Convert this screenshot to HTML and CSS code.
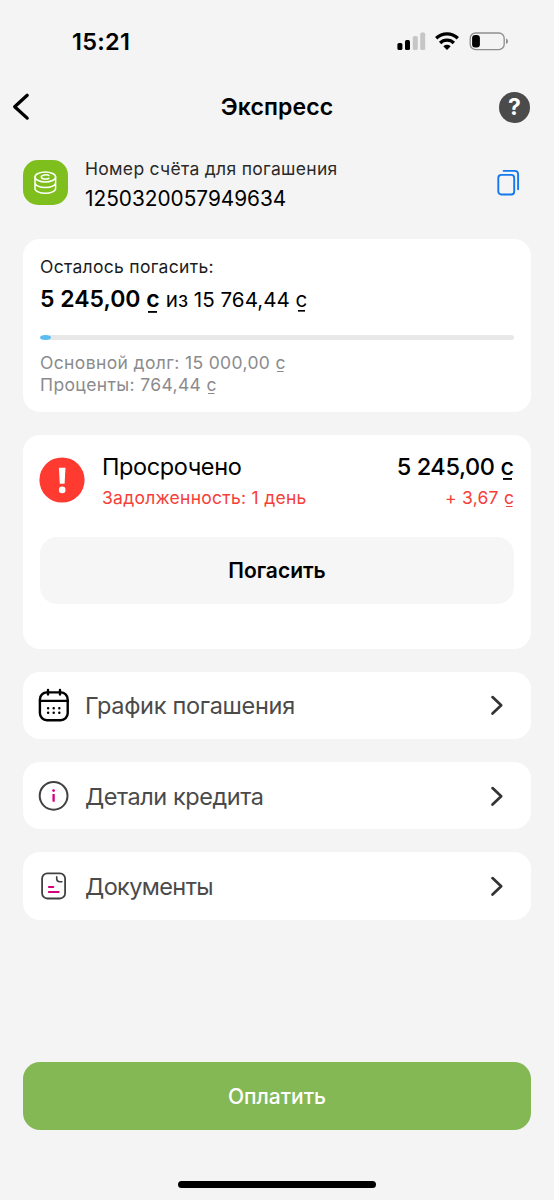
FILE: index.html
```html
<!DOCTYPE html>
<html lang="ru">
<head>
<meta charset="utf-8">
<meta name="viewport" content="width=device-width, initial-scale=1">
<title>Экспресс</title>
<link rel="stylesheet" href="styles.css">
</head>
<body>
<div class="screen">
  <div class="status">
    <span class="time">15:21</span>
    <svg class="status-icons" width="112" height="20" viewBox="0 0 112 20">
      <g>
        <rect x="0.4" y="11" width="5" height="7" rx="1.6"/>
        <rect x="8" y="8" width="5" height="10" rx="1.6"/>
        <rect x="15.8" y="4" width="5" height="14" rx="1.6" fill="#c6c6c6"/>
        <rect x="23.2" y="0.6" width="5" height="17.4" rx="1.6" fill="#c6c6c6"/>
      </g>
      <g fill="none" stroke="#000" stroke-width="3.3">
        <path d="M39.2 6.3A15.6 15.6 0 0 1 60.8 6.3"/>
        <path d="M43.1 11A9.7 9.7 0 0 1 56.9 11"/>
      </g>
      <path d="M46.3 14.3Q50 11.4 53.7 14.3L50 18Z"/>
      <rect x="73.2" y="1" width="34" height="16.6" rx="5.4" fill="none" stroke="#8e8e8e" stroke-width="1.3"/>
      <rect x="75.1" y="2.9" width="7.8" height="12.6" rx="3.2"/>
      <path d="M109 6.6Q111 7.4 111 9.3T109 12Z" fill="#8e8e8e"/>
    </svg>
  </div>

  <header class="header">
    <svg width="30" height="30" viewBox="0 0 30 30" fill="none" stroke="#000" stroke-width="3.3" stroke-linecap="round" stroke-linejoin="round"><path d="M20.2 3.3 7.7 14.7l12.5 11.4"/></svg>
    <h1 class="title">Экспресс</h1>
    <span class="help">?</span>
  </header>

  <section class="account">
    <div class="account-icon">
      <svg width="45" height="45" viewBox="0 0 45 45" fill="none" stroke="#fff" stroke-width="1.5" stroke-linecap="round">
        <ellipse cx="22.3" cy="17" rx="10.3" ry="4.9"/>
        <path d="M12 17v11.4c0 2.700 4.600 4.900 10.300 4.900s10.300-2.200 10.300-4.900V17M12 22.700c0 2.700 4.600 4.900 10.300 4.900s10.300-2.200 10.300-4.900"/>
        <path d="M25.900 15.500c-2.200-1.300-7.600-.8-7.600 1.500s5.400 2.600 7.600 1.300"/>
      </svg>
    </div>
    <div class="account-text">
      <div class="account-label">Номер счёта для погашения</div>
      <div class="account-number">1250320057949634</div>
    </div>
    <svg width="24" height="28" viewBox="0 0 24 28" fill="none" stroke="#1479ee" stroke-width="1.9" stroke-linecap="round"><rect x="2.3" y="5.900" width="15.900" height="19.600" rx="3"/><path d="M7.600 1.900H18.600Q22.100 1.900 22.100 5.400V20.200"/></svg>
  </section>

  <section class="card debt">
    <div class="debt-label">Осталось погасить:</div>
    <div class="debt-sum"><b class="debt-left">5 245,00 <span class="som">с</span></b><span class="debt-total">из 15 764,44 <span class="som">с</span></span></div>
    <div class="progress"><div class="progress-fill"></div></div>
    <div class="debt-line">Основной долг: 15 000,00 <span class="som">с</span></div>
    <div class="debt-line">Проценты: 764,44 <span class="som">с</span></div>
  </section>

  <section class="card overdue">
    <div class="overdue-row">
      <svg width="46" height="46" viewBox="0 0 46 46"><circle cx="23" cy="23" r="22.600" fill="#ff3a30"/><path d="M19.900 10.700h6.600l-.9 16h-4.800z" fill="#fff"/><circle cx="23.200" cy="32.900" r="3.300" fill="#fff"/></svg>
      <div class="overdue-text">
        <div class="overdue-title">Просрочено</div>
        <div class="overdue-days">Задолженность: 1 день</div>
      </div>
      <div class="overdue-amounts">
        <div class="overdue-sum">5 245,00 <span class="som">с</span></div>
        <div class="overdue-fee">+ 3,67 <span class="som">с</span></div>
      </div>
    </div>
    <button class="repay"><span>Погасить</span></button>
  </section>

  <a class="card item">
    <svg width="32" height="36" viewBox="0 0 32 36" fill="none" stroke="#000" stroke-width="2.400" stroke-linecap="round"><rect x="1.900" y="5.400" width="27.800" height="27.800" rx="7"/><path d="M2 13.900h28M10 2.900v4.500M22 2.900v4.500"/><path d="M10.100 21.300h.01M15.700 21.300h.01M21.300 21.300h.01M10.100 25.700h.01M15.700 25.700h.01M21.300 25.700h.01" stroke-width="2.500"/></svg>
    <span class="item-label schedule">График погашения</span>
    <svg class="chevron" width="14" height="22" viewBox="0 0 14 22"><path d="M2.500 3.100 11.200 11.300 2.500 19.500"/></svg>
  </a>
  <a class="card item">
    <svg width="32" height="36" viewBox="0 0 32 36" fill="none"><circle cx="15.600" cy="17.800" r="13.900" stroke="#414141" stroke-width="2"/><path d="M15.600 16v7.700" stroke="#d6007d" stroke-width="2.300"/><circle cx="15.600" cy="12.600" r="1.400" fill="#d6007d"/></svg>
    <span class="item-label details">Детали кредита</span>
    <svg class="chevron" width="14" height="22" viewBox="0 0 14 22"><path d="M2.500 3.100 11.200 11.300 2.500 19.500"/></svg>
  </a>
  <a class="card item">
    <svg width="32" height="36" viewBox="0 0 32 36" fill="none" stroke="#414141" stroke-width="1.800" stroke-linecap="round"><rect x="4.100" y="5.300" width="23" height="25.200" rx="5.200"/><path d="M18.700 8.900v1.900q0 2.900 2.900 2.900h2.300" stroke-width="1.600"/><path d="M10.900 19.100h4.400M10.900 23.900h9.800" stroke="#d6007d" stroke-width="2"/></svg>
    <span class="item-label documents">Документы</span>
    <svg class="chevron" width="14" height="22" viewBox="0 0 14 22"><path d="M2.500 3.100 11.200 11.300 2.500 19.500"/></svg>
  </a>

  <footer class="footer">
    <button class="pay"><span>Оплатить</span></button>
    <div class="home-bar"></div>
  </footer>
</div>
</body>
</html>
```
FILE: styles.css
```css
* { box-sizing: border-box; }
body { margin: 0; background: #f4f4f4; font-family: Inter, "Liberation Sans", sans-serif; color: #000; }
.screen { width: 554px; height: 1200px; display: flex; flex-direction: column; padding: 0 23px; overflow: hidden; }
button { font-family: inherit; border: 0; padding: 0; display: flex; align-items: center; justify-content: center; }

/* Som sign: the letter with a short bar below it */
.som {
  display: inline-block;
  line-height: 1.2;
  letter-spacing: 0;
  background: linear-gradient(currentColor, currentColor) center bottom 0.04em / 66% 0.08em no-repeat;
}

.status { height: 83px; display: flex; justify-content: space-between; align-items: center; padding: 0 22px 0 49px; }
.time { font-size: 23.5px; font-weight: 600; letter-spacing: 0.3px; line-height: 28px; }
.status-icons { display: block; }

.header { height: 48px; margin: 0 -23px; padding: 0 24px 0 7px; display: grid; grid-template-columns: 47px 1fr 31px; align-items: center; }
.title { margin: 0; padding-left: 1px; text-align: center; font-size: 23px; font-weight: 600; line-height: 28px; letter-spacing: 0.1px; }
.help { width: 31px; height: 31px; border-radius: 50%; background: #4b4b4b; color: #fff; font-size: 23px; font-weight: 700; line-height: 31px; text-align: center; }

.account { margin-top: 29px; height: 45px; display: flex; align-items: center; padding-right: 11px; }
.account-icon { width: 45px; height: 45px; border-radius: 15px; background: #7ebf1d; }
.account-icon svg { display: block; }
.account-text { flex: 1; margin-left: 17px; padding-top: 3px; white-space: nowrap; }
.account-label { font-size: 17.5px; line-height: 28px; color: #2a2a2a; letter-spacing: 0.3px; }
.account-number { font-size: 20.8px; line-height: 31px; }

.card { background: #fff; border-radius: 17px; }
.debt { height: 173px; margin-top: 34px; padding: 16px 17px; white-space: nowrap; }
.debt-label { font-size: 17.5px; line-height: 24px; color: #1c1c1c; letter-spacing: 0.3px; }
.debt-sum { display: flex; align-items: baseline; height: 38px; line-height: 40px; }
.debt-left { font-size: 23px; font-weight: 600; }
.debt-total { font-size: 20.6px; margin-left: 6px; }
.progress { height: 5px; margin: 18px 0 12px; border-radius: 3px; background: #e8e8e8; overflow: hidden; }
.progress-fill { width: 11px; height: 5px; border-radius: 50%; background: #57bdf2; }
.debt-line { font-size: 17.5px; height: 22px; line-height: 22px; color: #8b8b8d; letter-spacing: 0.37px; }

.overdue { height: 214px; margin-top: 23px; padding: 16px 17px; }
.overdue-row { display: flex; align-items: flex-start; height: 86px; white-space: nowrap; }
.overdue-row svg { margin-top: 6px; margin-left: -1px; }
.overdue-text { flex: 1; margin-left: 17px; }
.overdue-title, .overdue-sum { font-size: 23.5px; height: 32px; line-height: 32px; letter-spacing: -0.4px; }
.overdue-days, .overdue-fee { font-size: 17.5px; height: 28px; line-height: 30px; color: #f5403a; letter-spacing: 0.27px; }
.overdue-amounts { text-align: right; }
.overdue-sum { font-weight: 500; }
.repay { width: 100%; height: 67px; border-radius: 17px; background: #f6f6f6; font-size: 21px; font-weight: 600; color: #000; }

.item { height: 67.5px; margin-top: 22.7px; padding: 0 27px 0 15px; display: flex; align-items: center; }
.item-label { flex: 1; margin-left: 15px; padding-top: 2px; font-size: 23.5px; line-height: 32px; color: #4a4a4a; white-space: nowrap; }
.schedule { letter-spacing: -0.3px; }
.details { letter-spacing: -0.45px; }
.documents { letter-spacing: -0.62px; }
.chevron path { fill: none; stroke: #333; stroke-width: 2.7px; stroke-linecap: round; stroke-linejoin: round; }

.footer { margin-top: auto; display: flex; flex-direction: column; align-items: center; padding-bottom: 12px; }
.pay { width: 100%; height: 68px; border-radius: 17px; background: #84b854; color: #fff; font-size: 21px; font-weight: 500; }
.home-bar { width: 198px; height: 7px; border-radius: 4px; background: #000; margin-top: 51px; }
```
